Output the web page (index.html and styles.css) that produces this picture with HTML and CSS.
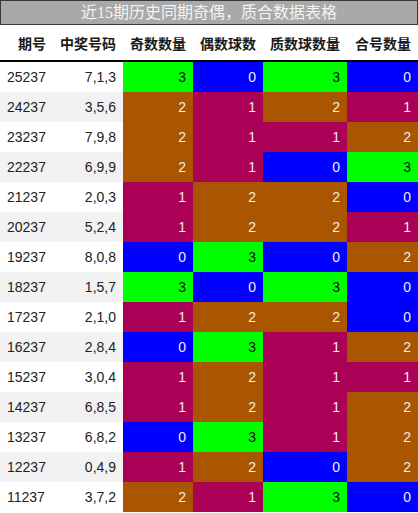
FILE: index.html
```html
<!DOCTYPE html>
<html lang="zh">
<head>
<meta charset="utf-8">
<title>近15期历史同期奇偶，质合数据表格</title>
<link rel="stylesheet" href="styles.css">
</head>
<body>
<div class="title">近15期历史同期奇偶，质合数据表格</div>
<table class="grid">
<colgroup>
<col class="c1"><col class="c2"><col class="c3"><col class="c4"><col class="c5"><col class="c6">
</colgroup>
<thead>
<tr><th>期号</th><th>中奖号码</th><th>奇数数量</th><th>偶数球数</th><th>质数球数量</th><th>合号数量</th></tr>
</thead>
<tbody>
<tr><td class="qi">25237</td><td class="hm">7,1,3</td><td class="v3">3</td><td class="v0">0</td><td class="v3">3</td><td class="v0">0</td></tr>
<tr><td class="qi">24237</td><td class="hm">3,5,6</td><td class="v2">2</td><td class="v1">1</td><td class="v2">2</td><td class="v1">1</td></tr>
<tr><td class="qi">23237</td><td class="hm">7,9,8</td><td class="v2">2</td><td class="v1">1</td><td class="v1">1</td><td class="v2">2</td></tr>
<tr><td class="qi">22237</td><td class="hm">6,9,9</td><td class="v2">2</td><td class="v1">1</td><td class="v0">0</td><td class="v3">3</td></tr>
<tr><td class="qi">21237</td><td class="hm">2,0,3</td><td class="v1">1</td><td class="v2">2</td><td class="v2">2</td><td class="v0">0</td></tr>
<tr><td class="qi">20237</td><td class="hm">5,2,4</td><td class="v1">1</td><td class="v2">2</td><td class="v2">2</td><td class="v1">1</td></tr>
<tr><td class="qi">19237</td><td class="hm">8,0,8</td><td class="v0">0</td><td class="v3">3</td><td class="v0">0</td><td class="v2">2</td></tr>
<tr><td class="qi">18237</td><td class="hm">1,5,7</td><td class="v3">3</td><td class="v0">0</td><td class="v3">3</td><td class="v0">0</td></tr>
<tr><td class="qi">17237</td><td class="hm">2,1,0</td><td class="v1">1</td><td class="v2">2</td><td class="v2">2</td><td class="v0">0</td></tr>
<tr><td class="qi">16237</td><td class="hm">2,8,4</td><td class="v0">0</td><td class="v3">3</td><td class="v1">1</td><td class="v2">2</td></tr>
<tr><td class="qi">15237</td><td class="hm">3,0,4</td><td class="v1">1</td><td class="v2">2</td><td class="v1">1</td><td class="v1">1</td></tr>
<tr><td class="qi">14237</td><td class="hm">6,8,5</td><td class="v1">1</td><td class="v2">2</td><td class="v1">1</td><td class="v2">2</td></tr>
<tr><td class="qi">13237</td><td class="hm">6,8,2</td><td class="v0">0</td><td class="v3">3</td><td class="v1">1</td><td class="v2">2</td></tr>
<tr><td class="qi">12237</td><td class="hm">0,4,9</td><td class="v1">1</td><td class="v2">2</td><td class="v0">0</td><td class="v2">2</td></tr>
<tr><td class="qi">11237</td><td class="hm">3,7,2</td><td class="v2">2</td><td class="v1">1</td><td class="v3">3</td><td class="v0">0</td></tr>
</tbody>
</table>
</body>
</html>
```
FILE: styles.css
```css
html, body {
  margin: 0;
  padding: 0;
  background: #ffffff;
}

.title {
  box-sizing: border-box;
  width: 418px;
  height: 25px;
  border: 1px solid #3a3a3a;
  background: #a9a9a9;
  color: #f4f4f4;
  font-family: "Liberation Serif", "Noto Sans CJK SC", serif;
  font-size: 16px;
  line-height: 23px;
  text-align: center;
}

.grid {
  width: 418px;
  border-collapse: collapse;
  table-layout: fixed;
  font-family: "Liberation Sans", Arial, "Noto Sans CJK SC", sans-serif;
  font-size: 14px;
  color: #222222;
}

.c1 { width: 53px; }
.c2 { width: 70px; }
.c3 { width: 70px; }
.c4 { width: 70px; }
.c5 { width: 84px; }
.c6 { width: 71px; }

.grid th {
  height: 35px;
  padding: 0 7px 0 0;
  text-align: right;
  font-family: "Noto Sans CJK SC", sans-serif;
  font-weight: bold;
  font-size: 14px;
  color: #1a1a1a;
  border-bottom: 2px solid #000000;
  white-space: nowrap;
}

.grid td {
  height: 30px;
  padding: 0 7px 0 0;
  text-align: right;
  white-space: nowrap;
}

.grid td.qi {
  text-align: left;
  padding: 0 0 0 7px;
}

.grid tbody tr:nth-child(even) td.qi,
.grid tbody tr:nth-child(even) td.hm {
  background: #f2f2f2;
}

.grid td.v0 { background: #0000ff; color: #eeeeee; }
.grid td.v1 { background: #aa0055; color: #eeeeee; }
.grid td.v2 { background: #aa5500; color: #eeeeee; }
.grid td.v3 { background: #00ff00; color: #111111; }
```
